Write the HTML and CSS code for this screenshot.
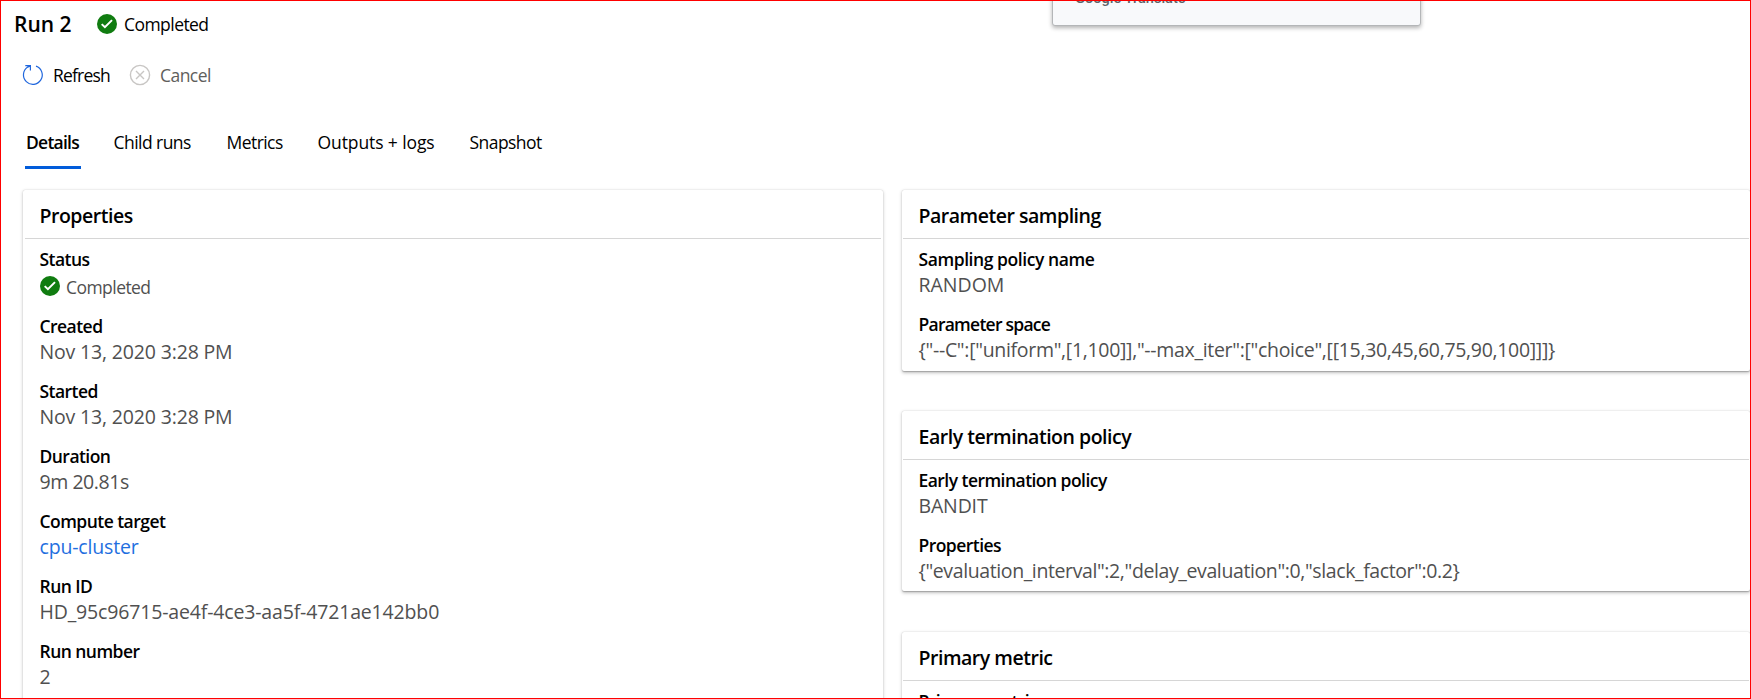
FILE: index.html
```
<!DOCTYPE html>
<html lang="en">
<head>
<meta charset="utf-8">
<title>Run 2</title>
<link rel="stylesheet" href="styles.css">
</head>
<body>
<svg class="defs" width="0" height="0">
  <symbol id="check" viewBox="0 0 20 20"><circle cx="10" cy="10" r="10" fill="#107c10"/><path d="M4.7 10.1l3.2 3.1 7.1-7.1" fill="none" stroke="#fff" stroke-width="2"/></symbol>
</svg>
<div class="page">
  <div class="popup"><span>Google Translate</span></div>
  <header class="head">
    <h1 class="run-title">Run 2</h1>
    <svg class="icon"><use href="#check"/></svg>
    <span class="text head-status">Completed</span>
  </header>
  <div class="toolbar">
    <svg class="icon" viewBox="0 0 20 20" fill="none" stroke="#1f66dd" stroke-width="1.2"><path d="M13 1.1A9.4 9.4 0 1 1 4.7 2.1L7.2.9M2.3.6H7.4V5.5"/></svg>
    <span class="text refresh">Refresh</span>
    <svg class="icon" viewBox="0 0 20 20" fill="none" stroke="#c8c6c4" stroke-width="1.4"><circle cx="10" cy="10" r="9.6"/><path d="M6 6l8 8M14 6l-8 8"/></svg>
    <span class="text cancel">Cancel</span>
  </div>
  <nav class="tabs">
    <span class="tab active">Details</span>
    <span class="tab">Child runs</span>
    <span class="tab">Metrics</span>
    <span class="tab tab-wide">Outputs + logs</span>
    <span class="tab">Snapshot</span>
  </nav>
  <main class="columns">
    <section class="card card-main">
      <h2 class="card-title">Properties</h2>
      <dl class="list">
        <div class="item item-status"><dt>Status</dt><dd><svg class="icon"><use href="#check"/></svg><span class="text">Completed</span></dd></div>
        <div class="item"><dt>Created</dt><dd>Nov 13, 2020 3:28 PM</dd></div>
        <div class="item"><dt>Started</dt><dd>Nov 13, 2020 3:28 PM</dd></div>
        <div class="item"><dt>Duration</dt><dd class="snug">9m 20.81s</dd></div>
        <div class="item"><dt>Compute target</dt><dd><a class="link">cpu-cluster</a></dd></div>
        <div class="item"><dt>Run ID</dt><dd>HD_95c96715-ae4f-4ce3-aa5f-4721ae142bb0</dd></div>
        <div class="item"><dt>Run number</dt><dd>2</dd></div>
      </dl>
    </section>
    <div class="side">
      <section class="card">
        <h2 class="card-title">Parameter sampling</h2>
        <dl class="list">
          <div class="item"><dt class="roomy">Sampling policy name</dt><dd class="caps">RANDOM</dd></div>
          <div class="item"><dt class="tight">Parameter space</dt><dd class="code">{"--C":["uniform",[1,100]],"--max_iter":["choice",[[15,30,45,60,75,90,100]]]}</dd></div>
        </dl>
      </section>
      <section class="card card-policy">
        <h2 class="card-title">Early termination policy</h2>
        <dl class="list">
          <div class="item"><dt>Early termination policy</dt><dd>BANDIT</dd></div>
          <div class="item"><dt>Properties</dt><dd class="json">{"evaluation_interval":2,"delay_evaluation":0,"slack_factor":0.2}</dd></div>
        </dl>
      </section>
      <section class="card card-metric">
        <h2 class="card-title">Primary metric</h2>
        <dl class="list">
          <div class="item"><dt>Primary metric</dt></div>
        </dl>
      </section>
    </div>
  </main>
</div>
</body>
</html>
```
FILE: styles.css
```
* { box-sizing: border-box; }
body { margin: 0; background: #fff; font-family: "Open Sans", "Noto Sans", sans-serif; color: #000; }
h1, h2, dl, dt, dd { margin: 0; }
.defs { position: absolute; }
.page { position: relative; width: 1751px; height: 699px; overflow: hidden; border: 1px solid #f00; }
.popup { position: absolute; left: 1051px; top: -14px; width: 369px; height: 39px; padding: 0 22px; background: #f8f9fb; border: 1px solid #b4b6b8; border-radius: 0 0 3px 3px; box-shadow: 0 2px 4px rgba(0,0,0,.3); font: 500 14.6px/20px Roboto, sans-serif; color: #5f6368; }
.icon { width: 20px; height: 20px; flex: none; overflow: visible; }
.text { font-size: 17.5px; line-height: 24px; letter-spacing: -.55px; }
.head { display: flex; align-items: center; height: 46px; padding-left: 13px; }
.run-title { width: 83px; font-size: 21px; line-height: 28px; font-weight: 600; }
.head-status { margin-left: 7px; }
.toolbar { display: flex; align-items: center; height: 56px; padding-left: 22px; }
.refresh { width: 77px; margin-left: 10px; letter-spacing: -.8px; }
.cancel { margin-left: 10px; color: #605e5c; }
.tabs { display: grid; grid-template-columns: 87px 113px 91px 152px 90px; height: 66px; padding: 24px 0 0 24px; font-size: 17.5px; line-height: 31px; letter-spacing: -.55px; }
.tab { height: 42px; padding-left: 1.5px; white-space: nowrap; }
.tab-wide { letter-spacing: -.1px; }
.active { width: 56px; padding-left: 1px; font-weight: 600; border-bottom: 3px solid #015cda; letter-spacing: -.75px; }
.columns { display: grid; grid-template-columns: 860px 1fr; gap: 19px; margin: 21px 0 0 22px; }
.card { height: 181px; padding: 0 1px; border-radius: 2px; background: #fff; box-shadow: 0 1.6px 3.6px rgba(0,0,0,.24), 0 .3px 1px rgba(0,0,0,.2); }
.card-main { height: 560px; padding: 0 2px; }
.card-title { height: 49px; padding-left: 15.5px; border-bottom: 1px solid #d6d6d6; font-size: 19.5px; line-height: 52px; font-weight: 600; letter-spacing: -.48px; }
.list { padding: 7px 15.5px 0; }
.card-main .card-title, .card-main .list { padding-left: 14.5px; }
.item { height: 65px; }
.item dt { font-size: 17.5px; line-height: 26px; font-weight: 600; letter-spacing: -.54px; }
.item .roomy { letter-spacing: -.43px; }
.item .tight { letter-spacing: -.75px; }
.item dd { display: flex; align-items: center; font-size: 19.5px; line-height: 26px; color: #505050; white-space: nowrap; letter-spacing: -.16px; }
.item .code { letter-spacing: -.31px; }
.item .json { letter-spacing: -.39px; }
.item .snug { letter-spacing: -.45px; }
.item .caps { letter-spacing: 0; }
.item-status { height: 67px; }
.item-status dd { padding-top: 1px; }
.item-status .text { margin: 2px 0 0 6.5px; }
.link { color: #1f6fdf; }
.card-policy { height: 180px; margin-top: 40px; }
.card-metric { margin-top: 41px; }
```
